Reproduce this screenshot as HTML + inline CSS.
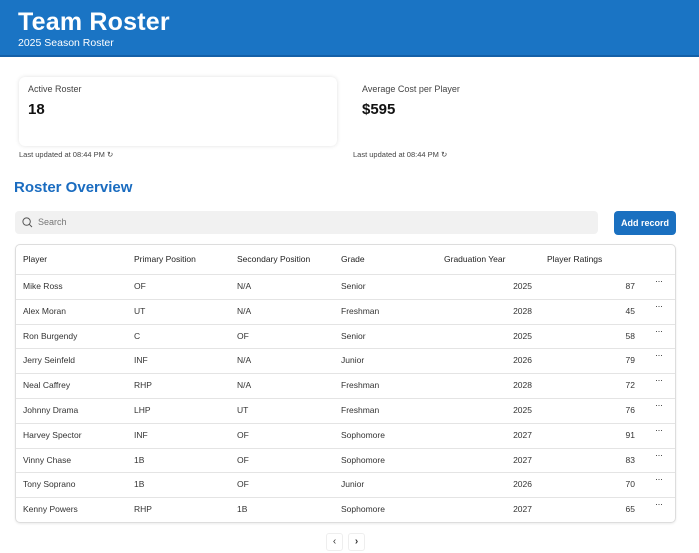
<!DOCTYPE html>
<html><head><style>
*{margin:0;padding:0;box-sizing:border-box}
body{width:699px;height:553px;overflow:hidden;background:#fff;font-family:"Liberation Sans",sans-serif;color:#222;position:relative}
.hdr{position:absolute;left:0;top:0;width:699px;height:57px;background:#1a74c4;border-bottom:2px solid #1460a8}
.hdr h1{position:absolute;left:18px;top:8px;font-size:25px;color:#fff;font-weight:bold;letter-spacing:0.2px}
.hdr p{position:absolute;left:18px;top:37px;font-size:10.5px;color:#fff}
.card{position:absolute;top:77px;height:69px;width:318px;background:#fff;border-radius:6px;box-shadow:0 0 4px rgba(0,0,0,0.12)}
.card .l{position:absolute;left:9px;top:7px;font-size:9px;color:#444}
.card .v{position:absolute;left:9px;top:24px;font-size:15px;font-weight:bold;color:#111}
.upd{position:absolute;top:150px;font-size:7.5px;color:#444}
h2{position:absolute;left:14px;top:179px;font-size:15px;color:#1a6cc0;font-weight:bold}
.search{position:absolute;left:15px;top:211px;width:583px;height:23px;background:#f1f1f1;border-radius:4px}
.search span{position:absolute;left:23px;top:6px;font-size:9px;color:#777}
.btn{position:absolute;left:614px;top:211px;width:62px;height:24px;background:#1a70c0;border-radius:4px;color:#fff;font-size:9px;font-weight:bold;text-align:center;line-height:24px}
.tbl{position:absolute;left:15px;top:244px;width:661px;height:279px;border:1px solid #ddd;border-radius:5px;box-shadow:0 1px 2px rgba(0,0,0,0.08)}
.row{position:absolute;left:0;width:659px;height:24.8px;border-top:1px solid #e4e4e4;font-size:8.5px;color:#333}
.row div{position:absolute;top:6px}
.th{color:#222;top:0;height:29px;border-top:none}
.th div{top:9px}
.c1{left:7px}.c2{left:118px}.c3{left:221px}.c4{left:325px}.c5{right:143px}.c6{right:40px}.c7{left:639px;top:1px!important;font-size:9px;letter-spacing:-0.5px}
.pg{position:absolute;top:533px;width:17px;height:18px;border:1px solid #eee;border-radius:3px;font-size:10px;text-align:center;line-height:16px;color:#333}
</style></head><body>
<div class="hdr"><h1>Team Roster</h1><p>2025 Season Roster</p></div>
<div class="card" style="left:19px"><div class="l">Active Roster</div><div class="v">18</div></div>
<div class="card" style="left:353px;box-shadow:none"><div class="l">Average Cost per Player</div><div class="v">$595</div></div>
<div class="upd" style="left:19px">Last updated at 08:44 PM ↻</div>
<div class="upd" style="left:353px">Last updated at 08:44 PM ↻</div>
<h2>Roster Overview</h2>
<div class="search"><svg style="position:absolute;left:7px;top:6px" width="11" height="11" viewBox="0 0 11 11"><circle cx="4.6" cy="4.6" r="3.7" fill="none" stroke="#555" stroke-width="1"/><line x1="7.3" y1="7.3" x2="10" y2="10" stroke="#555" stroke-width="1"/></svg><span>Search</span></div>
<div class="btn">Add record</div>
<div class="tbl">
<div class="row th" style="top:0"><div class="c1">Player</div><div class="c2">Primary Position</div><div class="c3">Secondary Position</div><div class="c4">Grade</div><div style="left:428px">Graduation Year</div><div style="left:531px">Player Ratings</div></div>
<div class="row" style="top:29px"><div class="c1">Mike Ross</div><div class="c2">OF</div><div class="c3">N/A</div><div class="c4">Senior</div><div class="c5">2025</div><div class="c6">87</div><div class="c7">···</div></div>
<div class="row" style="top:53.8px"><div class="c1">Alex Moran</div><div class="c2">UT</div><div class="c3">N/A</div><div class="c4">Freshman</div><div class="c5">2028</div><div class="c6">45</div><div class="c7">···</div></div>
<div class="row" style="top:78.6px"><div class="c1">Ron Burgendy</div><div class="c2">C</div><div class="c3">OF</div><div class="c4">Senior</div><div class="c5">2025</div><div class="c6">58</div><div class="c7">···</div></div>
<div class="row" style="top:103.4px"><div class="c1">Jerry Seinfeld</div><div class="c2">INF</div><div class="c3">N/A</div><div class="c4">Junior</div><div class="c5">2026</div><div class="c6">79</div><div class="c7">···</div></div>
<div class="row" style="top:128.2px"><div class="c1">Neal Caffrey</div><div class="c2">RHP</div><div class="c3">N/A</div><div class="c4">Freshman</div><div class="c5">2028</div><div class="c6">72</div><div class="c7">···</div></div>
<div class="row" style="top:153px"><div class="c1">Johnny Drama</div><div class="c2">LHP</div><div class="c3">UT</div><div class="c4">Freshman</div><div class="c5">2025</div><div class="c6">76</div><div class="c7">···</div></div>
<div class="row" style="top:177.8px"><div class="c1">Harvey Spector</div><div class="c2">INF</div><div class="c3">OF</div><div class="c4">Sophomore</div><div class="c5">2027</div><div class="c6">91</div><div class="c7">···</div></div>
<div class="row" style="top:202.6px"><div class="c1">Vinny Chase</div><div class="c2">1B</div><div class="c3">OF</div><div class="c4">Sophomore</div><div class="c5">2027</div><div class="c6">83</div><div class="c7">···</div></div>
<div class="row" style="top:227.4px"><div class="c1">Tony Soprano</div><div class="c2">1B</div><div class="c3">OF</div><div class="c4">Junior</div><div class="c5">2026</div><div class="c6">70</div><div class="c7">···</div></div>
<div class="row" style="top:252.2px"><div class="c1">Kenny Powers</div><div class="c2">RHP</div><div class="c3">1B</div><div class="c4">Sophomore</div><div class="c5">2027</div><div class="c6">65</div><div class="c7">···</div></div>
</div>
<div class="pg" style="left:326px">‹</div>
<div class="pg" style="left:348px;font-weight:bold">›</div>
</body></html>
